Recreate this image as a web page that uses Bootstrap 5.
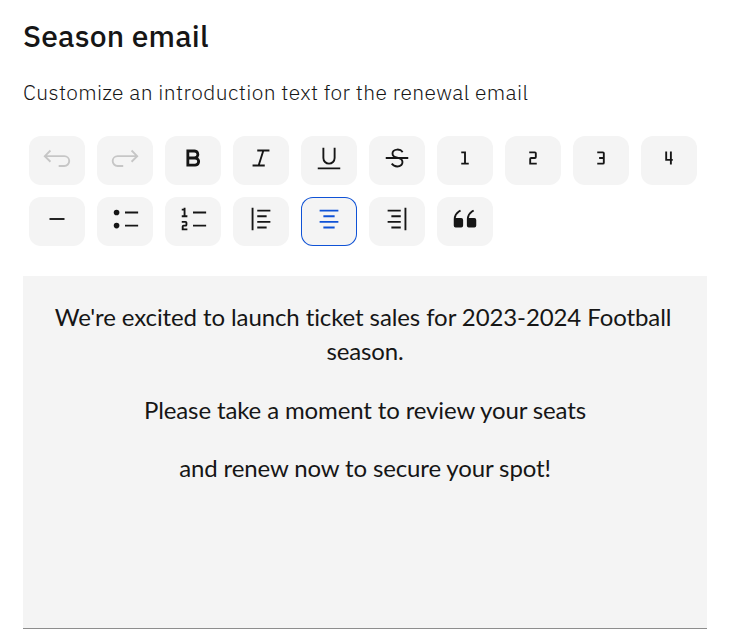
<!DOCTYPE html>
<html lang="en">
<head>
<meta charset="utf-8">
<meta name="viewport" content="width=device-width, initial-scale=1">
<title>Season email</title>
<link href="https://cdn.jsdelivr.net/npm/bootstrap@5.3.0/dist/css/bootstrap.min.css" rel="stylesheet">
<style>
  body { color: #161616; font-family: "IBM Plex Sans", Roboto, "Liberation Sans", sans-serif; overflow: hidden; }
  .season-panel { width: 707px; padding: 16px 0 0 23px; }
  .season-title { font-size: 30px; line-height: 40px; font-weight: 500; margin: 0 0 20px; white-space: nowrap; }
  .season-hint { font-size: 21px; line-height: 32px; font-weight: 300; margin: 0 0 28px; white-space: nowrap; }
  .season-title span { letter-spacing: 0.2px; }
  .season-hint span { letter-spacing: 0.4px; }
  .editor-tools { gap: 12px; padding: 0 6px; margin-bottom: 30px; }
  .tool-btn { width: 56px; height: 49px; padding: 7px 0 0; border: 0; border-radius: 12px; background: #f4f4f4; color: #161616; line-height: 0; }
  .tool-btn svg { width: 30px; height: 30px; fill: currentColor; }
  .tool-btn:disabled { background: #f4f4f4; color: #c6c6c6; opacity: 1; border: 0; }
  .tool-btn.picked { color: #0f52d6; box-shadow: inset 0 0 0 1px #0f52d6; }
  .editor-area { height: 353px; background: #f4f4f4; border-bottom: 1px solid #8d8d8d; padding: 24px 24px 0; font-family: Lato, sans-serif; font-size: 24px; line-height: 34px; letter-spacing: -0.13px; }
  .editor-area p { margin: 0 0 24.5px; }
  .opening-line { padding-right: 4px; letter-spacing: -0.1px; }
</style>
<script src="https://cdn.jsdelivr.net/npm/bootstrap@5.3.0/dist/js/bootstrap.bundle.min.js"></script>
</head>
<body>
<main class="season-panel">
  <h1 class="season-title"><span>Season email</span></h1>
  <p class="season-hint"><span>Customize an introduction text for the renewal email</span></p>
  <div class="editor-tools d-flex flex-wrap" role="toolbar" aria-label="Formatting">
    <button class="btn tool-btn d-flex justify-content-center align-items-start" disabled aria-label="Undo"><svg viewBox="0 0 32 32"><path fill="none" stroke="currentColor" stroke-width="2" d="M9 8 3 14l6 6M3 14h20.8a5.25 5.25 0 0 1 0 10.5h-6"/></svg></button>
    <button class="btn tool-btn d-flex justify-content-center align-items-start" disabled aria-label="Redo"><svg viewBox="0 0 32 32"><path fill="none" stroke="currentColor" stroke-width="2" d="m23 8 6 6-6 6M29 14H8.1a5.25 5.25 0 0 0 0 10.5h6"/></svg></button>
    <button class="btn tool-btn d-flex justify-content-center align-items-start" aria-label="Bold"><svg viewBox="0 0 32 32"><path d="M18.25 25H9V7h8.5a5.25 5.25 0 0 1 4 8.65A5.25 5.25 0 0 1 18.25 25ZM12 22h6.23a2.25 2.25 0 1 0 0-4.5H12Zm0-7.5h5.5a2.25 2.25 0 1 0 0-4.5H12Z"/></svg></button>
    <button class="btn tool-btn d-flex justify-content-center align-items-start" aria-label="Italic"><svg viewBox="0 0 32 32"><path d="M25 9V7H12v2h5.14l-4.37 14H7v2h13v-2h-5.14l4.37-14z"/></svg></button>
    <button class="btn tool-btn d-flex justify-content-center align-items-start" aria-label="Underline"><svg viewBox="0 0 32 32"><path d="M4 26h24v2H4zM16 23a7 7 0 0 1-7-7V5h2v11a5 5 0 0 0 10 0V5h2v11a7 7 0 0 1-7 7z"/></svg></button>
    <button class="btn tool-btn d-flex justify-content-center align-items-start" aria-label="Strikethrough"><svg viewBox="0 0 32 32"><path d="M28,15H17.9563c-.4522-.1237-.9037-.2324-1.3381-.3352-2.8077-.6641-4.396-1.1506-4.396-3.4231a2.8684,2.8684,0,0,1,.7866-2.145,4.7888,4.7888,0,0,1,3.0137-1.09c2.8291-.07,4.1347.8894,5.2011,2.35l1.6153-1.1792a7.4727,7.4727,0,0,0-6.83-3.1706,6.7726,6.7726,0,0,0-4.4,1.6611,4.8274,4.8274,0,0,0-1.3862,3.5735A4.3723,4.3723,0,0,0,11.9573,15H4v2H17.6519c1.9668.57,3.1432,1.3123,3.1733,3.3579a3.119,3.119,0,0,1-.8623,2.3931A5.8241,5.8241,0,0,1,16.2432,24a6.6344,6.6344,0,0,1-5.1451-2.6912L9.5649,22.593A8.5262,8.5262,0,0,0,16.2119,26h.0088a7.67,7.67,0,0,0,5.1172-1.8369,5.078,5.078,0,0,0,1.4868-3.8306A4.9543,4.9543,0,0,0,21.6157,17H28Z"/></svg></button>
    <button class="btn tool-btn d-flex justify-content-center align-items-start" aria-label="Heading level one"><svg viewBox="0 0 32 32"><path d="M12 9h5v12h3v2h-8v-2h3V11h-3z"/></svg></button>
    <button class="btn tool-btn d-flex justify-content-center align-items-start" aria-label="Heading level two"><svg viewBox="0 0 32 32"><path d="M12 9h6a2 2 0 0 1 2 2v4a2 2 0 0 1-2 2h-4v4h6v2h-8v-6a2 2 0 0 1 2-2h4v-4h-6z"/></svg></button>
    <button class="btn tool-btn d-flex justify-content-center align-items-start" aria-label="Heading level three"><svg viewBox="0 0 32 32"><path d="M18 9h-6v2h6v4h-4v2h4v4h-6v2h6a2 2 0 0 0 2-2V11a2 2 0 0 0-2-2z"/></svg></button>
    <button class="btn tool-btn d-flex justify-content-center align-items-start" aria-label="Heading level four"><svg viewBox="0 0 32 32"><path d="M17 9v8h-3V9h-2v10h5v4h2v-4h1v-2h-1V9z"/></svg></button>
    <button class="btn tool-btn d-flex justify-content-center align-items-start" aria-label="Divider"><svg viewBox="0 0 32 32"><path d="M8 15h16v2H8z"/></svg></button>
    <button class="btn tool-btn d-flex justify-content-center align-items-start" aria-label="Bulleted list"><svg viewBox="0 0 32 32"><circle cx="7" cy="9" r="3"/><circle cx="7" cy="23" r="3"/><path d="M16 22h14v2H16zM16 8h14v2H16z"/></svg></button>
    <button class="btn tool-btn d-flex justify-content-center align-items-start" aria-label="Numbered list"><svg viewBox="0 0 32 32"><path d="M16 22h14v2H16zM16 8h14v2H16zM8 12V4H6v1H4v2h2v5H4v2h6v-2zM10 28H4v-4a2 2 0 0 1 2-2h2v-2H4v-2h4a2 2 0 0 1 2 2v2a2 2 0 0 1-2 2H6v2h4z"/></svg></button>
    <button class="btn tool-btn d-flex justify-content-center align-items-start" aria-label="Align left"><svg viewBox="0 0 32 32"><path d="M12 6h14v2H12zM12 12h10v2H12zM12 18h14v2H12zM12 24h10v2H12zM6 4h2v24H6z"/></svg></button>
    <button class="btn tool-btn picked d-flex justify-content-center align-items-start" aria-label="Align center" aria-pressed="true"><svg viewBox="0 0 32 32"><path d="M6 6h20v2H6zM10 12h12v2H10zM6 18h20v2H6zM10 24h12v2H10z"/></svg></button>
    <button class="btn tool-btn d-flex justify-content-center align-items-start" aria-label="Align right"><svg viewBox="0 0 32 32"><path d="M6 6h14v2H6zM10 12h10v2H10zM6 18h14v2H6zM10 24h10v2H10zM24 4h2v24h-2z"/></svg></button>
    <button class="btn tool-btn d-flex justify-content-center align-items-start" aria-label="Quote"><svg viewBox="0 0 32 32"><path id="quote-half" d="M12 15H6.11A9 9 0 0 1 10 8.86l1.79-1.2L10.69 6 8.9 7.2A11 11 0 0 0 4 16.35V23a2 2 0 0 0 2 2h6a2 2 0 0 0 2-2v-6a2 2 0 0 0-2-2Z"/><use href="#quote-half" x="14"/></svg></button>
  </div>
  <div class="editor-area text-center">
    <p><span class="opening-line">We're excited to launch ticket sales for 2023-2024 Football</span> season.</p>
    <p>Please take a moment to review your seats</p>
    <p>and renew now to secure your spot!</p>
  </div>
</main>
</body>
</html>
